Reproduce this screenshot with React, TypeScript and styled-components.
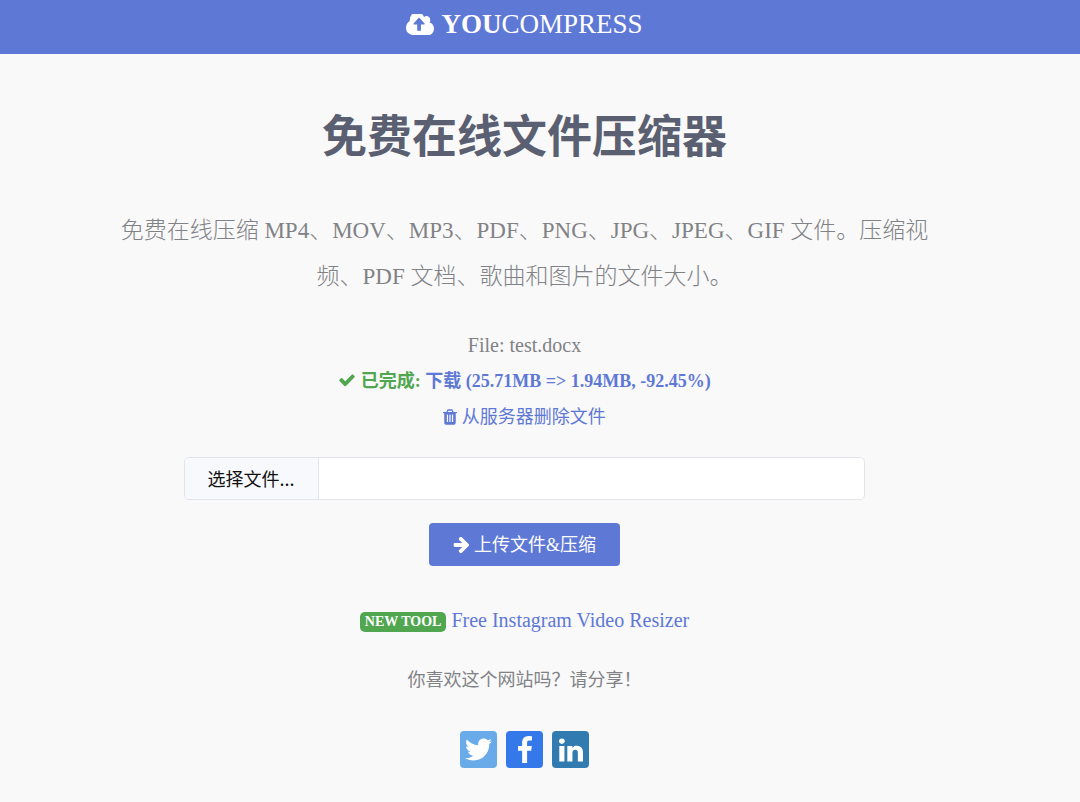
import styled, { createGlobalStyle } from 'styled-components';
import { FaTwitter } from 'react-icons/fa';

const GlobalStyle = createGlobalStyle`
  *, *::before, *::after { box-sizing: border-box; }
  body {
    margin: 0;
    background: #f9f9f9;
    color: #818286;
    font-family: "Liberation Serif", "Noto Sans CJK SC", serif;
    font-size: 18px;
    line-height: 36px;
  }
  h1, p { margin: 0; }
`;

const Header = styled.header`
  display: flex;
  justify-content: center;
  padding: 1px 31px 7px 0;
  background: #5e78d6;
`;

const Brand = styled.a`
  display: flex;
  align-items: center;
  gap: 7px;
  color: #fff;
  font-size: 27px;
  line-height: 46px;
  text-decoration: none;
`;

const Main = styled.main`
  display: flex;
  flex-direction: column;
  align-items: center;
  padding: 50px 31px 32px 0;
  text-align: center;
`;

const Title = styled.h1`
  color: #5a6072;
  font-size: 45px;
  font-weight: 700;
  line-height: 68px;
`;

const Lead = styled.p`
  width: 80%;
  max-width: 840px;
  margin-top: 36px;
  font-size: 23px;
  font-weight: 300;
  line-height: 46px;
`;

const Result = styled.section`
  margin-top: 27px;
`;

const FileName = styled.p`
  font-size: 20px;
`;

const Link = styled.a<{ $bold?: boolean; $large?: boolean }>`
  color: #5e78d6;
  font-size: ${(p) => (p.$large ? 20 : 18)}px;
  font-weight: ${(p) => (p.$bold ? 700 : 400)};
  text-decoration: none;
`;

const Done = styled.strong`
  color: #50a750;
`;

const Glyph = styled.svg`
  fill: currentColor;
  vertical-align: -2px;
`;

const Form = styled.form`
  display: flex;
  flex-direction: column;
  align-items: center;
  gap: 23px;
  width: 65%;
  margin-top: 22px;
`;

const Picker = styled.label`
  position: relative;
  display: flex;
  width: 100%;
  height: 43px;
  overflow: hidden;
  border: 1px solid #e2e4e9;
  border-radius: 5px;
  background: #fff;
  cursor: pointer;
`;

const HiddenFile = styled.input`
  position: absolute;
  inset: 0;
  opacity: 0;
  cursor: pointer;
`;

const PickerButton = styled.span`
  padding: 0 23px;
  border-right: 1px solid #e2e4e9;
  background: #f8f9fc;
  color: #111;
  font-family: "Noto Sans CJK SC", sans-serif;
  line-height: 41px;
`;

const Submit = styled.button`
  display: flex;
  align-items: center;
  gap: 5px;
  height: 43px;
  padding: 0 24px;
  border: 0;
  border-radius: 4px;
  background: #5e78d6;
  color: #fff;
  font: inherit;
  cursor: pointer;
`;

const Tool = styled.p`
  display: flex;
  align-items: center;
  gap: 5px;
  margin-top: 36px;
`;

const Badge = styled.span`
  height: 20px;
  margin-top: 3px;
  padding: 0 5px;
  border-radius: 5px;
  background: #50a750;
  color: #fff;
  font-size: 14px;
  font-weight: 700;
  line-height: 20px;
`;

const Share = styled.p`
  margin-top: 24px;
`;

const Socials = styled.nav`
  display: flex;
  gap: 9px;
  margin-top: 33px;
`;

const Social = styled.a<{ $bg: string }>`
  display: flex;
  align-items: center;
  justify-content: center;
  width: 37px;
  height: 37px;
  border-radius: 4px;
  background: ${(p) => p.$bg};
  color: #fff;
`;

const CloudUpload = () => (
  <Glyph width="28" height="21" viewBox="-64 256 1920 1280" preserveAspectRatio="none" aria-hidden="true">
    <path d="M1216 864q0-14-9-23l-352-352q-9-9-23-9t-23 9l-351 351q-10 12-10 24 0 14 9 23t23 9h224v352q0 13 9.5 22.5t22.5 9.5h192q13 0 22.5-9.5t9.5-22.5v-352h224q13 0 22.5-9.5t9.5-22.5zm640 288q0 159-112.5 271.5t-271.5 112.5h-1088q-185 0-316.5-131.5t-131.5-316.5q0-130 70-240t188-165q-2-30-2-43 0-212 150-362t362-150q156 0 285.5 87t188.5 231q71-62 166-62 106 0 181 75t75 181q0 76-41 138 130 31 213.5 135.5t83.5 238.5z" />
  </Glyph>
);

const Check = () => (
  <Glyph width="18" height="18" viewBox="0 0 1792 1792" aria-hidden="true">
    <path d="M1671 566q0 40-28 68l-724 724-136 136q-28 28-68 28t-68-28l-136-136-362-362q-28-28-28-68t28-68l136-136q28-28 68-28t68 28l294 295 656-657q28-28 68-28t68 28l136 136q28 28 28 68z" />
  </Glyph>
);

const Trash = () => (
  <Glyph width="14" height="16" viewBox="0 0 1408 1536" aria-hidden="true">
    <path d="M512 1248v-704q0-14-9-23t-23-9h-64q-14 0-23 9t-9 23v704q0 14 9 23t23 9h64q14 0 23-9t9-23zm256 0v-704q0-14-9-23t-23-9h-64q-14 0-23 9t-9 23v704q0 14 9 23t23 9h64q14 0 23-9t9-23zm256 0v-704q0-14-9-23t-23-9h-64q-14 0-23 9t-9 23v704q0 14 9 23t23 9h64q14 0 23-9t9-23zm-544-992h448l-48-117q-7-9-17-11h-317q-10 2-17 11zm928 32v64q0 14-9 23t-23 9h-96v948q0 83-47 143.5t-113 60.5h-832q-66 0-113-58.5t-47-141.5v-952h-96q-14 0-23-9t-9-23v-64q0-14 9-23t23-9h309l70-167q15-37 54-63t79-26h320q40 0 79 26t54 63l70 167h309q14 0 23 9t9 23z" />
  </Glyph>
);

const ArrowRight = () => (
  <Glyph width="16" height="16" viewBox="64 197 1536 1536" aria-hidden="true">
    <path d="M1600 960q0 54-37 91l-651 651q-39 37-91 37-51 0-90-37l-75-75q-38-38-38-91t38-91l293-293h-704q-52 0-84.5-37.5t-32.5-90.5v-128q0-53 32.5-90.5t84.5-37.5h704l-293-294q-38-36-38-90t38-90l75-75q38-38 90-38 53 0 91 38l651 651q37 35 37 90z" />
  </Glyph>
);

const Facebook = () => (
  <Glyph width="14" height="27" viewBox="479 0 864 1664" aria-hidden="true">
    <path d="M1343 12v264h-157q-86 0-116 36t-30 108v189h293l-39 296h-254v759h-306v-759h-255v-296h255v-218q0-186 104-288.5t277-102.5q147 0 228 12z" />
  </Glyph>
);

const Linkedin = () => (
  <Glyph width="24" height="24" viewBox="128 148 1536 1468" aria-hidden="true">
    <path d="M477 625v991h-330v-991h330zm21-306q1 73-50.5 122t-135.5 49h-2q-82 0-132-49t-50-122q0-74 51.5-122.5t134.5-48.5 133 48.5 51 122.5zm1166 729v568h-329v-530q0-105-40.5-164.5t-126.5-59.5q-63 0-105.5 34.5t-63.5 85.5q-11 30-11 81v553h-329q2-399 2-647t-1-296l-1-48h329v144h-2q20-32 41-56t56.5-52 87-43.5 114.5-15.5q171 0 275 113.5t104 332.5z" />
  </Glyph>
);

export default function App() {
  return (
    <>
      <GlobalStyle />
      <Header>
        <Brand href="#">
          <CloudUpload />
          <span><b>YOU</b>COMPRESS</span>
        </Brand>
      </Header>
      <Main>
        <Title>免费在线文件压缩器</Title>
        <Lead>
          免费在线压缩 MP4、MOV、MP3、PDF、PNG、JPG、JPEG、GIF 文件。压缩视频、PDF 文档、歌曲和图片的文件大小。
        </Lead>
        <Result>
          <FileName>File: test.docx</FileName>
          <p>
            <Done><Check /> 已完成:</Done>{' '}
            <Link href="#" $bold>下载 (25.71MB =&gt; 1.94MB, -92.45%)</Link>
          </p>
          <p><Link href="#"><Trash /> 从服务器删除文件</Link></p>
        </Result>
        <Form onSubmit={(e) => e.preventDefault()}>
          <Picker>
            <HiddenFile type="file" />
            <PickerButton>选择文件...</PickerButton>
          </Picker>
          <Submit type="submit"><ArrowRight /><span>上传文件&amp;压缩</span></Submit>
        </Form>
        <Tool>
          <Badge>NEW TOOL</Badge>
          <Link href="#" $large>Free Instagram Video Resizer</Link>
        </Tool>
        <Share>你喜欢这个网站吗？请分享！</Share>
        <Socials aria-label="分享">
          <Social href="#" $bg="#69abe8" aria-label="Twitter"><FaTwitter size={27} /></Social>
          <Social href="#" $bg="#3578ea" aria-label="Facebook"><Facebook /></Social>
          <Social href="#" $bg="#327bb1" aria-label="LinkedIn"><Linkedin /></Social>
        </Socials>
      </Main>
    </>
  );
}
